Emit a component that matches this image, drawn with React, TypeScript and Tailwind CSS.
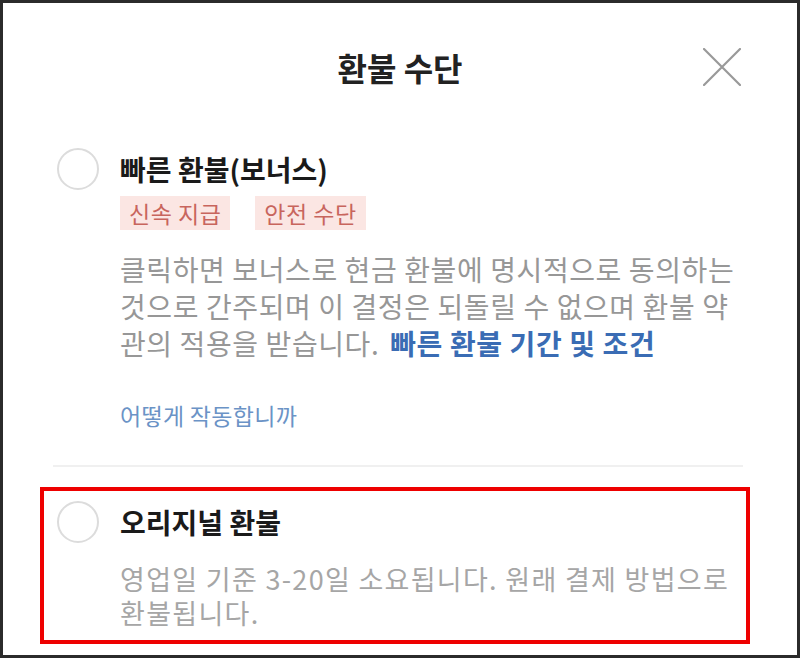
export default function App() {
    return (
        <div className="w-[800px] h-[658px] bg-white border-[3px] border-[#2b2b2b] overflow-hidden font-['Noto_Sans_CJK_KR',sans-serif]">
            {/* 헤더 */}
            <div className="relative h-[128px] flex items-center justify-center">
                <h1 className="text-[32px] font-bold text-[#222] leading-none">환불 수단</h1>
                <button className="absolute right-[56px] top-[45px] w-[38px] h-[38px]">
                    <svg viewBox="0 0 38 38" className="w-full h-full" fill="none" stroke="#999" strokeWidth={2.2} strokeLinecap="round">
                        <path d="M1 1L37 37M37 1L1 37" />
                    </svg>
                </button>
            </div>

            {/* 빠른 환불 */}
            <div className="mt-[17px] flex pl-[54px] gap-[21px]">
                <div className="w-[42px] h-[42px] shrink-0 rounded-full border-2 border-[#dcdcdc]" />
                <div className="flex-1">
                    <p className="text-[28px] font-bold text-[#1a1a1a] leading-[42px]">빠른 환불(보너스)</p>
                    <div className="mt-[6px] flex gap-[25px]">
                        {['신속 지급', '안전 수단'].map((tag) => (
                            <span key={tag} className="h-[34px] px-[9px] bg-[#fbe6e3] text-[#c8655d] text-[23px] tracking-[0.5px] leading-[34px]">
                                {tag}
                            </span>
                        ))}
                    </div>
                    <p className="mt-[21px] text-[28px] leading-[37px] text-[#979797] tracking-[0.6px] whitespace-nowrap">
                        클릭하면 보너스로 현금 환불에 명시적으로 동의하는<br />
                        것으로 간주되며 이 결정은 되돌릴 수 없으며 환불 약<br />
                        관의 적용을 받습니다.{' '}
                        <a href="#" className="ml-[4px] text-[#3a6cb4] font-bold">빠른 환불 기간 및 조건</a>
                    </p>
                    <a href="#" className="block mt-[38px] text-[23px] leading-[30px] text-[#6b93c6] tracking-[0.3px]">어떻게 작동합니까</a>
                </div>
            </div>

            <div className="mt-[35px] ml-[50px] mr-[54px] h-[2px] bg-[#f0f0f0]" />

            {/* 오리지널 환불 */}
            <div className="mt-[20px] ml-[37px] w-[710px] h-[157px] border-4 border-[#ee0000] flex pl-[13px] pt-[10px] gap-[21px]">
                <div className="w-[42px] h-[42px] shrink-0 rounded-full border-2 border-[#dcdcdc]" />
                <div className="flex-1">
                    <p className="text-[28px] font-bold text-[#1a1a1a] leading-[42px]">오리지널 환불</p>
                    <p className="mt-[19px] text-[27px] leading-[34px] text-[#a6a6a6] tracking-[1.3px] whitespace-nowrap">
                        영업일 기준 3-20일 소요됩니다. 원래 결제 방법으로<br />
                        환불됩니다.
                    </p>
                </div>
            </div>
        </div>
    );
}
